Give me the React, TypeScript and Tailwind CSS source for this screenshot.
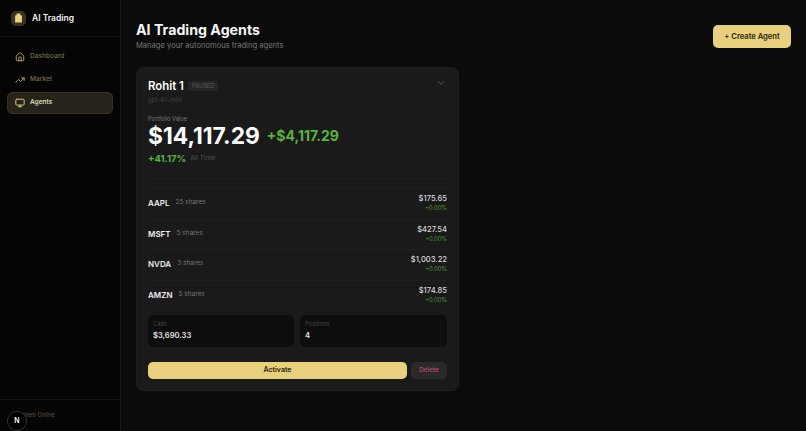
import React from 'react';
import { Home, TrendingUp, Monitor, ChevronDown } from 'lucide-react';

const navItems = [
  { icon: Home, label: 'Dashboard', active: false },
  { icon: TrendingUp, label: 'Market', active: false },
  { icon: Monitor, label: 'Agents', active: true },
];

const positions = [
  { symbol: 'AAPL', shares: '25 shares', price: '$175.65' },
  { symbol: 'MSFT', shares: '5 shares', price: '$427.54' },
  { symbol: 'NVDA', shares: '3 shares', price: '$1,003.22' },
  { symbol: 'AMZN', shares: '5 shares', price: '$174.85' },
];

const Sidebar = () => (
  <aside className="w-[121px] shrink-0 h-full flex flex-col bg-[#050505] border-r border-[#161616]">
    <div className="h-[37px] shrink-0 flex items-center gap-[6px] pl-[11px] border-b border-[#141414]">
      <div className="w-[15px] h-[15px] rounded-[5px] bg-[#3a3322] flex items-center justify-center">
        <svg width="9" height="10" viewBox="0 0 10 11">
          <path d="M3 0.5h4v1.5l1.8 1v7.5h-7.6V3L3 2z" fill="#e8d07e" />
        </svg>
      </div>
      <span className="text-[8.5px] font-semibold text-[#f0f0f0]">AI Trading</span>
    </div>
    <nav className="flex flex-col gap-[1px] px-[7px] pt-[9px]">
      {navItems.map((item) => (
        <div
          key={item.label}
          className={`h-[22px] flex items-center gap-[5px] pl-[7px] rounded-[5px] border ${
            item.active ? 'bg-[#26231a] border-[#38331f] text-[#eee7cf]' : 'border-transparent text-[#756b48]'
          }`}
        >
          <item.icon size={10} strokeWidth={2.4} className={item.active ? 'text-[#d8c47c]' : 'text-[#b3a163]'} />
          <span className="text-[6.6px] font-medium">{item.label}</span>
        </div>
      ))}
    </nav>
    <div className="mt-auto h-[32px] border-t border-[#141414] relative pl-[11px] pt-[11px]">
      <div className="flex items-center gap-[2px]">
        <span className="w-[3px] h-[3px] rounded-full bg-[#cfcfcf]" />
        <span className="text-[5.7px] text-[#5f5a45]">System Online</span>
      </div>
      <div className="absolute left-[7px] top-[11px] w-[20px] h-[20px] rounded-full bg-black border border-[#333] flex items-center justify-center">
        <span className="text-[7px] font-semibold text-white">N</span>
      </div>
    </div>
  </aside>
);

const AgentCard = () => (
  <div className="w-[323px] h-[324px] rounded-[7px] bg-[#1a1a1a] border border-[#1e1e1e] px-[11px] pt-[11px] flex flex-col">
    <div className="flex justify-between">
      <div>
        <div className="flex items-center gap-[4px]">
          <span className="text-[11.4px] leading-[14px] font-semibold text-white">Rohit 1</span>
          <span className="h-[10px] px-[4px] rounded-[2px] bg-[#262626] text-[5.5px] leading-[10px] tracking-wide text-[#5c5c5c]">PAUSED</span>
        </div>
        <div className="mt-[3px] text-[6px] leading-[8px] text-[#444]">gpt-4o-mini</div>
      </div>
      <ChevronDown size={10} className="text-[#666] mr-[1px] mt-[-1px]" />
    </div>
    <div className="mt-[11px] text-[5.7px] leading-[8px] text-[#777]">Portfolio Value</div>
    <div className="flex items-center gap-[7px]">
      <span className="text-[22.8px] leading-[26px] font-bold text-white">$14,117.29</span>
      <span className="text-[14px] leading-[16px] font-bold text-[#5bb143]">+$4,117.29</span>
    </div>
    <div className="flex items-center gap-[4px] mt-[3px]">
      <span className="text-[9.5px] leading-[14px] font-bold text-[#5bb143]">+41.17%</span>
      <span className="text-[6.5px] text-[#555]">All Time</span>
    </div>
    <div className="mt-[12px] pt-[9px] border-t border-[#1f1f1f]">
      {positions.map((p) => (
        <div key={p.symbol} className="h-[30.5px] flex items-center justify-between border-t border-[#202020] pb-[1px]">
          <div className="flex items-center gap-[6px]">
            <span className="text-[8px] font-semibold text-[#ececec]">{p.symbol}</span>
            <span className="text-[6.5px] text-[#777]">{p.shares}</span>
          </div>
          <div className="text-right">
            <div className="text-[7.6px] leading-[10px] font-medium text-[#d8d8d8]">{p.price}</div>
            <div className="text-[5.8px] leading-[8px] text-[#4f9a3a]">+0.00%</div>
          </div>
        </div>
      ))}
    </div>
    <div className="grid grid-cols-[146px_1fr] gap-[6px] mt-[5px]">
      <div className="h-[32px] rounded-[5px] bg-[#0d0d0d] pl-[5px] pt-[5px]">
        <div className="text-[5.7px] leading-[8px] text-[#444]">Cash</div>
        <div className="mt-[2px] text-[7.6px] leading-[12px] font-semibold text-[#e0e0e0]">$3,690.33</div>
      </div>
      <div className="h-[32px] rounded-[5px] bg-[#0d0d0d] pl-[5px] pt-[5px]">
        <div className="text-[5.7px] leading-[8px] text-[#444]">Positions</div>
        <div className="mt-[2px] text-[7.6px] leading-[12px] font-semibold text-[#e0e0e0]">4</div>
      </div>
    </div>
    <div className="flex gap-[4px] mt-[15px]">
      <button className="flex-1 h-[17px] rounded-[5px] bg-[#e9d07c] text-[7px] font-semibold text-[#2a2410]">Activate</button>
      <button className="w-[36px] h-[17px] rounded-[5px] bg-[#2a2a2a] text-[6.4px] font-medium text-[#c0486a]">Delete</button>
    </div>
  </div>
);

export default function App() {
  return (
    <div className="w-[806px] h-[431px] flex overflow-hidden bg-[#0b0b0b] font-['Inter',sans-serif]">
      <Sidebar />
      <main className="flex-1 pl-[15px] pr-[15px] pt-[21px]">
        <div className="flex justify-between items-start h-[46px]">
          <div>
            <h1 className="text-[14.2px] leading-[18px] font-bold text-[#f5f5f5]">AI Trading Agents</h1>
            <p className="mt-[1px] text-[7.6px] leading-[12px] text-[#777]">Manage your autonomous trading agents</p>
          </div>
          <button className="w-[78px] h-[23px] mt-[4px] rounded-[5px] bg-[#e9d07c] text-[7.6px] font-semibold text-[#2a2410]">+ Create Agent</button>
        </div>
        <AgentCard />
      </main>
    </div>
  );
}
